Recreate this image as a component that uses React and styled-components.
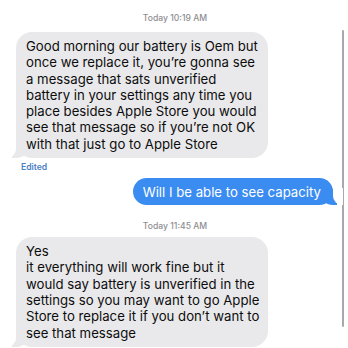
import React from 'react';
import styled, { createGlobalStyle } from 'styled-components';

const GlobalStyle = createGlobalStyle`
    body {
        margin: 0;
        background: #ffffff;
        font-family: Inter, "Liberation Sans", Arial, sans-serif;
    }
`;

const Screen = styled.div`
    position: relative;
    width: 348px;
    height: 348px;
    overflow: hidden;
    background: #ffffff;
`;

const Thread = styled.div`
    display: flex;
    flex-direction: column;
    padding: 12px 15px 0 16px;
`;

const Stamp = styled.div`
    align-self: center;
    margin-left: 1px;
    margin-top: ${p => p.$top || 0}px;
    font-size: 8.6px;
    line-height: 12px;
    font-weight: 500;
    color: #8e8e93;
`;

const Bubble = styled.div`
    position: relative;
    align-self: ${p => (p.$mine ? 'flex-end' : 'flex-start')};
    width: ${p => (p.$mine ? 'auto' : '252px')};
    box-sizing: border-box;
    margin-top: ${p => p.$top || 0}px;
    padding: ${p => (p.$mine ? '5.5px 12px 5.5px 10px' : '6px 10px 6px 10px')};
    border-radius: 16px;
    background: ${p => (p.$mine ? '#3b8cf1' : '#e9e9eb')};
    color: ${p => (p.$mine ? '#ffffff' : '#0d0d0d')};
    font-size: 13.2px;
    line-height: ${p => (p.$mine ? '16px' : '16.3px')};
    white-space: nowrap;

    &::before {
        content: "";
        position: absolute;
        bottom: 0;
        ${p => (p.$mine ? 'right: -4px;' : 'left: -4px;')}
        width: 18px;
        height: 16px;
        background: ${p => (p.$mine ? '#3b8cf1' : '#e9e9eb')};
        ${p => (p.$mine ? 'border-bottom-left-radius: 14px;' : 'border-bottom-right-radius: 14px;')}
        z-index: 0;
    }

    &::after {
        content: "";
        position: absolute;
        bottom: 0;
        ${p => (p.$mine ? 'right: -10px;' : 'left: -10px;')}
        width: 10px;
        height: 17px;
        background: #ffffff;
        ${p => (p.$mine ? 'border-bottom-left-radius: 9px;' : 'border-bottom-right-radius: 9px;')}
        z-index: 1;
    }
`;

const Text = styled.span`
    position: relative;
    z-index: 2;
`;

const Edited = styled.div`
    margin: 4px 0 0 5px;
    font-size: 8.6px;
    line-height: 11px;
    font-weight: 600;
    color: #4a80c8;
`;

const ScrollBar = styled.div`
    position: absolute;
    top: 30px;
    right: 4px;
    width: 2px;
    height: 297px;
    border-radius: 1px;
    background: #a9a9ab;
`;

const firstMessage = [
    'Good morning our battery is Oem but',
    'once we replace it, you\u2019re gonna see',
    'a message that sats unverified',
    'battery in your settings any time you',
    'place besides Apple Store you would',
    'see that message so if you\u2019re not OK',
    'with that just go to Apple Store',
];

const secondMessage = [
    'Yes',
    'it everything will work fine but it',
    'would say battery is unverified in the',
    'settings so you may want to go Apple',
    'Store to replace it if you don\u2019t want to',
    'see that message',
];

const Lines = ({ lines }) => (
    <Text>
        {lines.map((line, i) => (
            <React.Fragment key={i}>
                {line}
                {i < lines.length - 1 && <br />}
            </React.Fragment>
        ))}
    </Text>
);

export default function App() {
    return (
        <Screen>
            <GlobalStyle />
            <Thread>
                <Stamp>Today 10:19 AM</Stamp>
                <Bubble $top={8}>
                    <Lines lines={firstMessage} />
                </Bubble>
                <Edited>Edited</Edited>
                <Bubble $mine $top={5}>
                    <Text>Will I be able to see capacity</Text>
                </Bubble>
                <Stamp $top={15}>Today 11:45 AM</Stamp>
                <Bubble $top={5}>
                    <Lines lines={secondMessage} />
                </Bubble>
            </Thread>
            <ScrollBar />
        </Screen>
    );
}
